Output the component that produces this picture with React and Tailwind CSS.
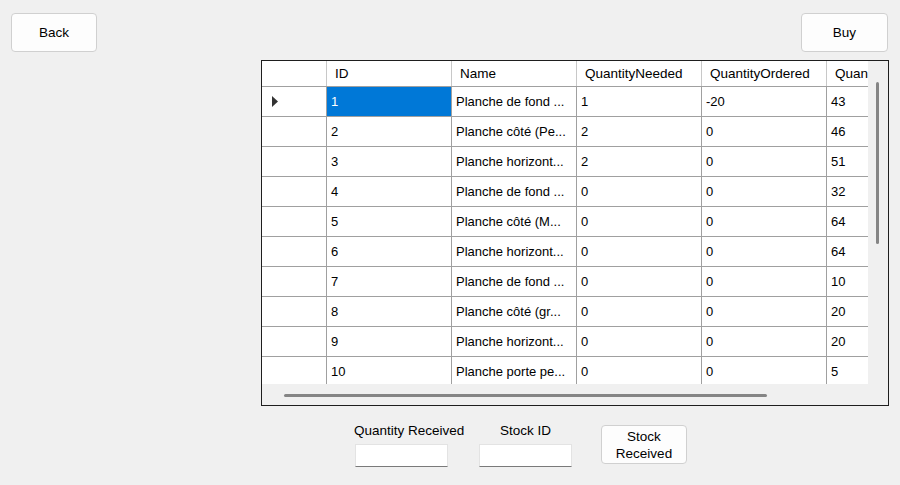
import React from "react";

const rows = [
  ["1", "Planche de fond ...", "1", "-20", "43"],
  ["2", "Planche côté (Pe...", "2", "0", "46"],
  ["3", "Planche horizont...", "2", "0", "51"],
  ["4", "Planche de fond ...", "0", "0", "32"],
  ["5", "Planche côté (M...", "0", "0", "64"],
  ["6", "Planche horizont...", "0", "0", "64"],
  ["7", "Planche de fond ...", "0", "0", "10"],
  ["8", "Planche côté (gr...", "0", "0", "20"],
  ["9", "Planche horizont...", "0", "0", "20"],
  ["10", "Planche porte pe...", "0", "0", "5"],
];

const headers = ["ID", "Name", "QuantityNeeded", "QuantityOrdered", "Quan"];
const widths = ["w-[125px]", "w-[125px]", "w-[125px]", "w-[125px]", "w-[41px]"];

function Btn({ children, className }) {
  return (
    <div
      className={
        "flex flex-col items-center justify-center bg-[#fdfdfd] border border-[#d0d0d0] rounded-[4px] text-[13.5px] leading-[17px] text-black " +
        className
      }
    >
      {children}
    </div>
  );
}

export default function App() {
  return (
    <div
      className="w-[900px] h-[485px] bg-[#f0f0f0] flex flex-col overflow-hidden text-black"
      style={{ fontFamily: '"Liberation Sans", Arial, sans-serif' }}
    >
      {/* top buttons */}
      <div className="flex justify-between pt-[13px] pl-[11px] pr-[12px]">
        <Btn className="w-[86px] h-[39px]">Back</Btn>
        <Btn className="w-[87px] h-[39px]">Buy</Btn>
      </div>

      {/* grid */}
      <div className="ml-[261px] mt-[8px] w-[628px] h-[346px] border border-[#1e1e1e] bg-[#f0f0f0] flex">
        <div className="flex flex-col w-[606px]">
          <div className="h-[323px] overflow-hidden bg-white">
            {/* header */}
            <div className="flex h-[26px] border-b border-[#a0a0a0] text-[13.5px]">
              <div className="w-[65px] border-r border-[#c8c8c8] shrink-0" />
              {headers.map((h, i) => (
                <div
                  key={h}
                  className={
                    widths[i] +
                    " shrink-0 flex items-center pl-[8px] pt-[2px] whitespace-nowrap overflow-hidden " +
                    (i < 4 ? "border-r border-[#c8c8c8]" : "")
                  }
                >
                  {h}
                </div>
              ))}
            </div>
            {/* body */}
            {rows.map((r, ri) => (
              <div key={ri} className="flex h-[30px] border-b border-[#a0a0a0] text-[13px]">
                <div className="w-[65px] shrink-0 border-r border-[#a0a0a0] flex items-center pl-[10px]">
                  {ri === 0 && (
                    <svg width="6" height="11" viewBox="0 0 6 11">
                      <path d="M0 0 L6 5.5 L0 11 Z" fill="#333" />
                    </svg>
                  )}
                </div>
                {r.map((c, ci) => (
                  <div
                    key={ci}
                    className={
                      widths[ci] +
                      " shrink-0 flex items-center pl-[4px] whitespace-nowrap overflow-hidden " +
                      (ci < 4 ? "border-r border-[#a0a0a0] " : "") +
                      (ri === 0 && ci === 0 ? "bg-[#0078d7] text-white" : "")
                    }
                  >
                    {c}
                  </div>
                ))}
              </div>
            ))}
          </div>
          {/* horizontal scrollbar */}
          <div className="flex-1 pt-[10px] pl-[22px]">
            <div className="w-[483px] h-[3px] rounded-full bg-[#858585]" />
          </div>
        </div>
        {/* vertical scrollbar */}
        <div className="flex-1 pl-[8px] pt-[21px]">
          <div className="w-[3px] h-[162px] rounded-full bg-[#858585]" />
        </div>
      </div>

      {/* bottom controls */}
      <div className="flex items-start mt-[17px]">
        <div className="ml-[354px] w-[110px] flex flex-col">
          <div className="text-[13.5px] leading-[15px] whitespace-nowrap">Quantity Received</div>
          <div className="mt-[6px] ml-[1px] w-[93px] h-[23px] bg-white border border-[#e3e3e3] border-b-[#7a7a7a]" />
        </div>
        <div className="ml-[15px] w-[93px] flex flex-col items-center">
          <div className="text-[13.5px] leading-[15px] whitespace-nowrap">Stock ID</div>
          <div className="mt-[6px] w-[93px] h-[23px] bg-white border border-[#e3e3e3] border-b-[#7a7a7a]" />
        </div>
        <Btn className="ml-[29px] mt-[2px] w-[86px] h-[39px]">
          <span>Stock</span>
          <span>Received</span>
        </Btn>
      </div>
    </div>
  );
}
